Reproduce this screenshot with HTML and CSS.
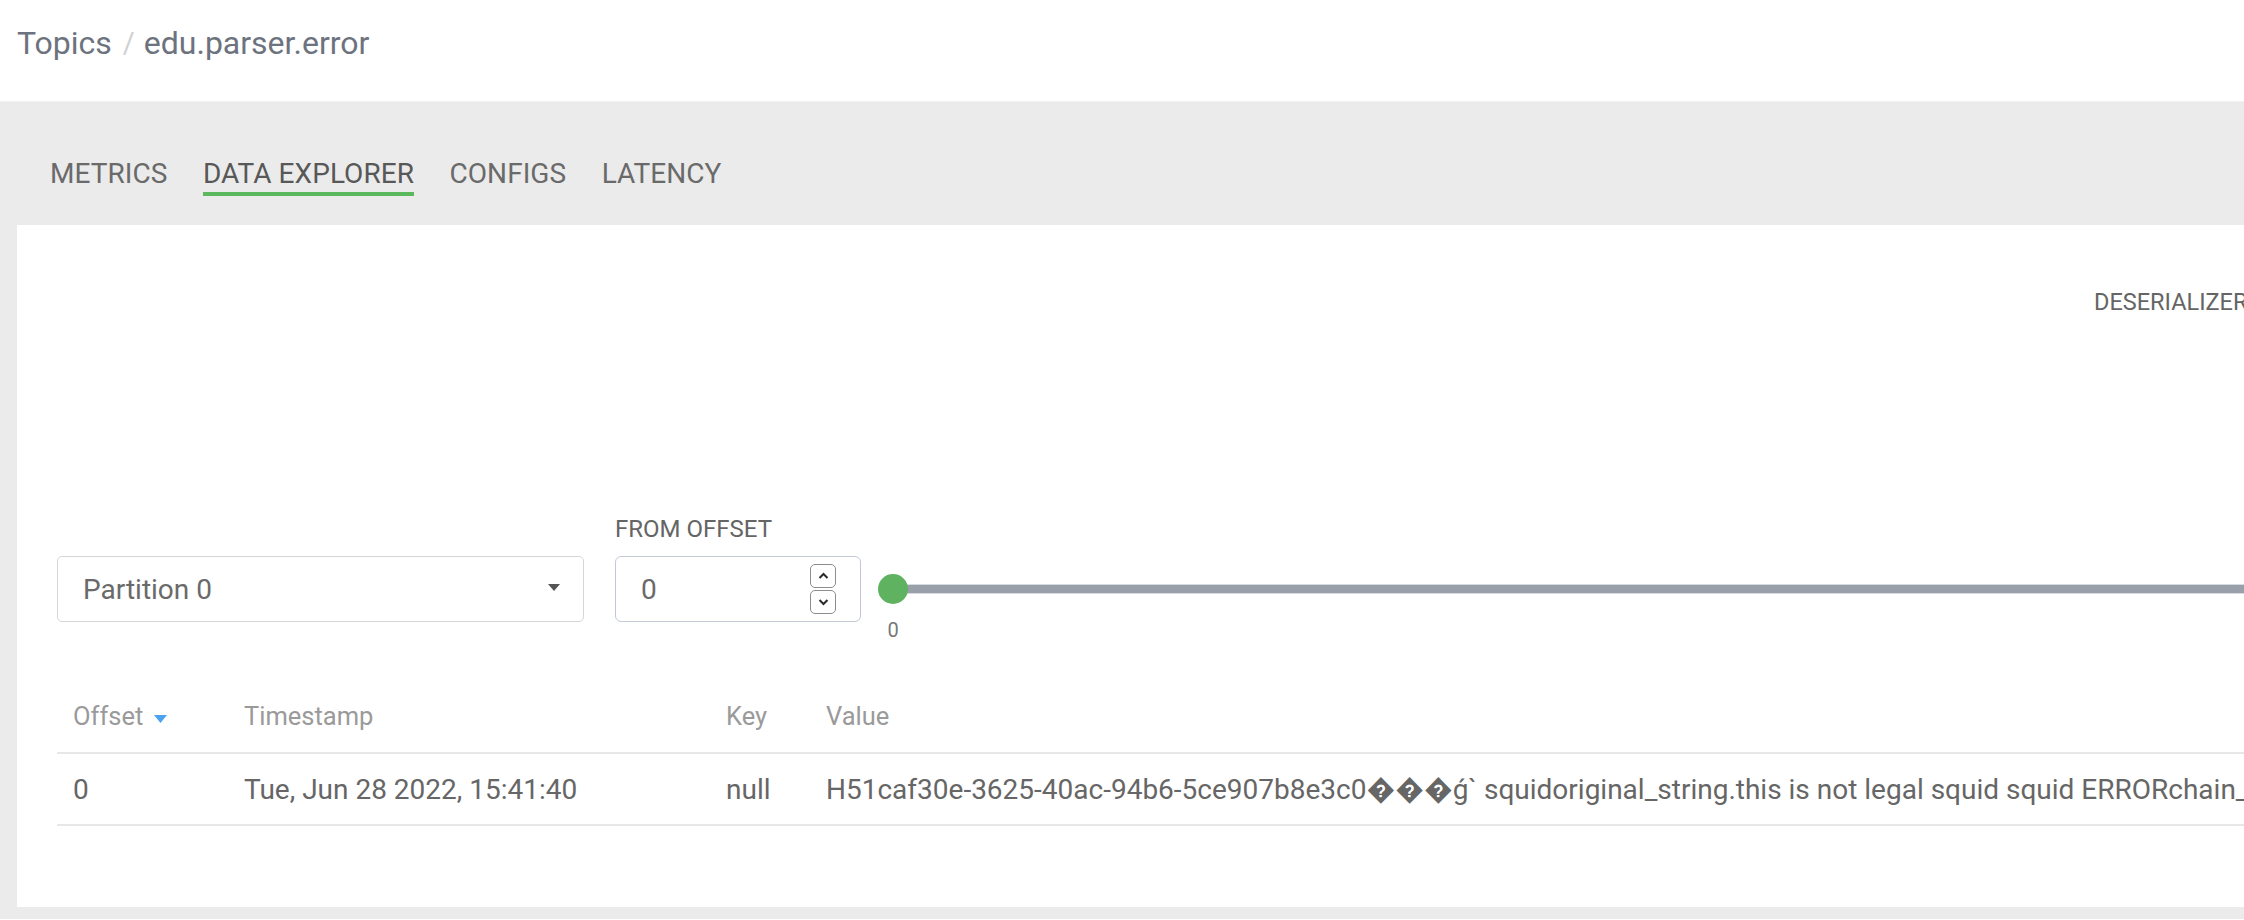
FILE: index.html
```html
<!DOCTYPE html>
<html lang="en">
<head>
<meta charset="utf-8">
<title>edu.parser.error – Data Explorer</title>
<link rel="stylesheet" href="styles.css">
</head>
<body>
<div class="page">
  <header class="topbar">
    <nav class="crumbs">
      <span class="crumb">Topics</span>
      <span class="crumb-sep">/</span>
      <span class="crumb">edu.parser.error</span>
    </nav>
  </header>

  <main class="content">
    <nav class="tabs">
      <span class="tab">METRICS</span>
      <span class="tab tab-active">DATA EXPLORER</span>
      <span class="tab">CONFIGS</span>
      <span class="tab">LATENCY</span>
    </nav>

    <section class="card">
      <div class="top-row">
        <div class="deser">
          <div class="field-label">DESERIALIZER</div>
        </div>
      </div>

      <div class="controls">
        <div class="select">
          <span class="select-text">Partition 0</span>
          <svg class="select-arrow" width="12" height="7" viewBox="0 0 12 7"><polygon points="0,0 12,0 6,7" fill="#555"/></svg>
        </div>

        <div class="offset-field">
          <div class="field-label">FROM OFFSET</div>
          <div class="number-input">
            <span class="number-value">0</span>
            <div class="spin">
              <span class="spin-btn">
                <svg width="11" height="8" viewBox="0 0 11 8"><polyline points="1.5,6 5.5,2 9.5,6" fill="none" stroke="#2b2b2b" stroke-width="2"/></svg>
              </span>
              <span class="spin-btn">
                <svg width="11" height="8" viewBox="0 0 11 8"><polyline points="1.5,2 5.5,6 9.5,2" fill="none" stroke="#2b2b2b" stroke-width="2"/></svg>
              </span>
            </div>
          </div>
        </div>

        <div class="slider">
          <div class="rail"></div>
          <div class="thumb"></div>
          <span class="slider-value">0</span>
        </div>
      </div>

      <table class="records">
        <colgroup>
          <col class="col-offset">
          <col class="col-ts">
          <col class="col-key">
          <col>
        </colgroup>
        <thead>
          <tr>
            <th>Offset <svg class="sort" width="13" height="8" viewBox="0 0 13 8"><polygon points="0,0 13,0 6.5,8" fill="#4da3f2"/></svg></th>
            <th>Timestamp</th>
            <th>Key</th>
            <th>Value</th>
          </tr>
        </thead>
        <tbody>
          <tr>
            <td>0</td>
            <td>Tue, Jun 28 2022, 15:41:40</td>
            <td>null</td>
            <td class="value">H51caf30e-3625-40ac-94b6-5ce907b8e3c0���ǵ` squidoriginal_string.this is not legal squid squid ERRORchain_</td>
          </tr>
        </tbody>
      </table>
    </section>
  </main>
</div>
</body>
</html>
```

FILE: styles.css
```css
html, body {
  margin: 0;
  padding: 0;
  overflow: hidden;
  background: #ffffff;
}

body {
  font-family: Roboto, "Liberation Sans", Arial, sans-serif;
  color: #666;
}

.page {
  width: 2560px;
}

/* ---------- top breadcrumb bar ---------- */
.topbar {
  height: 102px;
  box-sizing: border-box;
  padding: 27px 0 0 17px;
  background: #fff;
  border-bottom: 1px solid #f1f1f1;
}

.crumbs {
  display: flex;
  align-items: center;
  font-size: 32px;
  line-height: 32px;
  color: #6d737e;
}

.crumb-sep {
  color: #cfd1d4;
  margin: 0 9px 0 11px;
  font-size: 29px;
}

/* ---------- grey content area ---------- */
.content {
  background: #ebebeb;
  padding: 0 17px 12px;
}

.tabs {
  display: flex;
  gap: 35.5px;
  padding: 58px 0 0 33px;
  margin-bottom: 29px;
}

.tab {
  font-size: 28px;
  line-height: 28px;
  padding-bottom: 4px;
  border-bottom: 4px solid transparent;
  color: #6a6a6a;
  letter-spacing: 0.05px;
}

.tab-active {
  color: #585858;
  border-bottom-color: #5cb85c;
}

/* ---------- card ---------- */
.card {
  background: #fff;
  padding: 65px 40px 81px;
}

.top-row {
  height: 227px;
  display: flex;
  justify-content: flex-end;
}

.deser {
  width: 409px;
}

.field-label {
  font-size: 24px;
  line-height: 24px;
  color: #656565;
}

.deser .field-label {
  font-size: 23.5px;
  line-height: 24px;
}

.controls {
  display: flex;
  align-items: flex-end;
}

.select {
  width: 527px;
  height: 66px;
  box-sizing: border-box;
  border: 1.5px solid #d5d5d5;
  border-radius: 5px;
  display: flex;
  align-items: center;
  justify-content: space-between;
  padding: 0 23px 0 25px;
}

.select-text {
  font-size: 28px;
  color: #6a6a6a;
}

.select-arrow {
  margin-top: -4px;
}

.offset-field {
  width: 246px;
  margin-left: 31px;
  display: flex;
  flex-direction: column;
  gap: 15px;
}

.number-input {
  height: 66px;
  box-sizing: border-box;
  border: 1.5px solid #c3cad6;
  border-radius: 6px;
  display: flex;
  align-items: center;
  justify-content: space-between;
  padding: 0 24px 0 25px;
}

.number-value {
  font-size: 28px;
  color: #6a6a6a;
}

.spin {
  display: flex;
  flex-direction: column;
  gap: 2px;
}

.spin-btn {
  width: 24px;
  height: 22px;
  border: 1.5px solid #8d8d8d;
  border-radius: 5px;
  display: flex;
  align-items: center;
  justify-content: center;
  background: #fff;
}

/* ---------- slider ---------- */
.slider {
  flex: 1;
  height: 66px;
  margin-left: 17px;
  position: relative;
}

.rail {
  position: absolute;
  left: 15px;
  right: 0;
  top: 29px;
  height: 8px;
  background: #9aa0a9;
  box-shadow: 0 0 0 1px #d7dadf;
}

.thumb {
  position: absolute;
  left: 0;
  top: 18px;
  width: 30px;
  height: 30px;
  border-radius: 50%;
  background: #5fb25f;
}

.slider-value {
  position: absolute;
  left: 15px;
  top: 64px;
  transform: translateX(-50%);
  font-size: 20px;
  line-height: 20px;
  color: #777;
}

/* ---------- records table ---------- */
.records {
  width: 100%;
  margin-top: 58px;
  border-collapse: separate;
  border-spacing: 0;
  table-layout: fixed;
}

.col-offset { width: 171px; }
.col-ts { width: 482px; }
.col-key { width: 100px; }

.records th,
.records td {
  padding: 0 16px;
  text-align: left;
  white-space: nowrap;
  border-bottom: 2px solid #e7e7e7;
}

.records th {
  height: 72px;
  font-size: 25.5px;
  font-weight: 400;
  color: #9a9a9a;
}

.records td {
  height: 70px;
  font-size: 28px;
  color: #666;
}

.records td.value {
  overflow: hidden;
}

.sort {
  margin-left: 4px;
  vertical-align: 2px;
}
```
